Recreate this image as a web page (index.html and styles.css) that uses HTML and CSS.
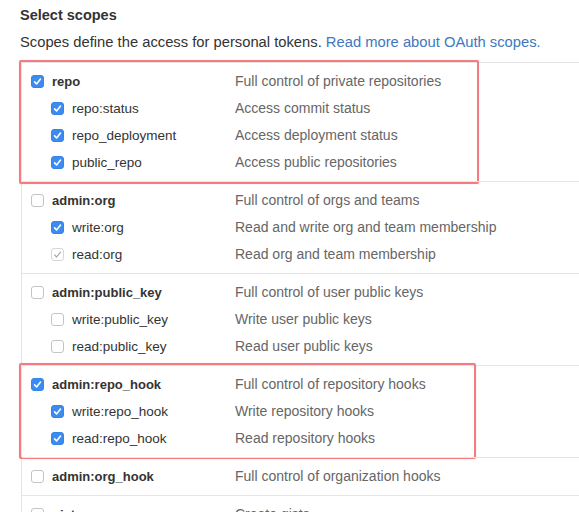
FILE: index.html
```html
<!DOCTYPE html>
<html>
<head>
<meta charset="utf-8">
<link rel="stylesheet" href="styles.css">
</head>
<body>
<div class="page">
  <h3 class="title">Select scopes</h3>
  <p class="note">Scopes define the access for personal tokens. <a href="#">Read more about OAuth scopes.</a></p>
  <div class="scopes">
    <div class="group">
      <span class="highlight hl-repo"></span>
      <div class="row parent"><span class="cb on"><svg viewBox="0 0 13 13"><path d="M3.6 6.9 5.6 9 9.5 4.1"/></svg></span><span class="name">repo</span><span class="desc">Full control of private repositories</span></div>
      <div class="row child"><span class="cb on"><svg viewBox="0 0 13 13"><path d="M3.6 6.9 5.6 9 9.5 4.1"/></svg></span><span class="name">repo:status</span><span class="desc">Access commit status</span></div>
      <div class="row child"><span class="cb on"><svg viewBox="0 0 13 13"><path d="M3.6 6.9 5.6 9 9.5 4.1"/></svg></span><span class="name">repo_deployment</span><span class="desc">Access deployment status</span></div>
      <div class="row child"><span class="cb on"><svg viewBox="0 0 13 13"><path d="M3.6 6.9 5.6 9 9.5 4.1"/></svg></span><span class="name">public_repo</span><span class="desc">Access public repositories</span></div>
    </div>
    <div class="group">
      <div class="row parent"><span class="cb"></span><span class="name">admin:org</span><span class="desc">Full control of orgs and teams</span></div>
      <div class="row child"><span class="cb on"><svg viewBox="0 0 13 13"><path d="M3.6 6.9 5.6 9 9.5 4.1"/></svg></span><span class="name">write:org</span><span class="desc">Read and write org and team membership</span></div>
      <div class="row child"><span class="cb dis"><svg viewBox="0 0 13 13"><path d="M3.6 6.9 5.6 9 9.5 4.1"/></svg></span><span class="name">read:org</span><span class="desc">Read org and team membership</span></div>
    </div>
    <div class="group">
      <div class="row parent"><span class="cb"></span><span class="name">admin:public_key</span><span class="desc">Full control of user public keys</span></div>
      <div class="row child"><span class="cb"></span><span class="name">write:public_key</span><span class="desc">Write user public keys</span></div>
      <div class="row child"><span class="cb"></span><span class="name">read:public_key</span><span class="desc">Read user public keys</span></div>
    </div>
    <div class="group">
      <span class="highlight hl-hook"></span>
      <div class="row parent"><span class="cb on"><svg viewBox="0 0 13 13"><path d="M3.6 6.9 5.6 9 9.5 4.1"/></svg></span><span class="name">admin:repo_hook</span><span class="desc">Full control of repository hooks</span></div>
      <div class="row child"><span class="cb on"><svg viewBox="0 0 13 13"><path d="M3.6 6.9 5.6 9 9.5 4.1"/></svg></span><span class="name">write:repo_hook</span><span class="desc">Write repository hooks</span></div>
      <div class="row child"><span class="cb on"><svg viewBox="0 0 13 13"><path d="M3.6 6.9 5.6 9 9.5 4.1"/></svg></span><span class="name">read:repo_hook</span><span class="desc">Read repository hooks</span></div>
    </div>
    <div class="group">
      <div class="row parent"><span class="cb"></span><span class="name">admin:org_hook</span><span class="desc">Full control of organization hooks</span></div>
    </div>
    <div class="group">
      <div class="row parent"><span class="cb"></span><span class="name">gist</span><span class="desc">Create gists</span></div>
    </div>
  </div>
</div>
</body>
</html>
```

FILE: styles.css
```css
* { box-sizing: border-box; }
html, body { margin: 0; padding: 0; background: #fff; }
body {
  font-family: "Liberation Sans", Arial, sans-serif;
  font-size: 14px;
  color: #333;
  overflow: hidden;
}
.page { padding-left: 20px; }
.title {
  margin: 0;
  padding-top: 5px;
  font-size: 14.5px;
  line-height: 20px;
  font-weight: bold;
  color: #333;
}
.note {
  margin: 7px 0 0;
  line-height: 20px;
  font-size: 14.75px;
  color: #333;
}
.note a { color: #4078c0; text-decoration: none; }
.scopes {
  margin-top: 10px;
  margin-left: 1px;
  border-left: 1px solid #e5e5e5;
}
.group {
  position: relative;
  border-top: 1px solid #e5e5e5;
  padding: 5px 0 5px 9px;
}
.row {
  display: flex;
  align-items: center;
  height: 27px;
  line-height: 27px;
}
.row.child { padding-left: 20px; }
.name { width: 183px; flex: none; font-size: 13.5px; }
.row.child .name { width: 163px; }
.parent .name { font-weight: bold; color: #333; font-size: 13px; }
.desc { color: #666; white-space: nowrap; }
.cb {
  flex: none;
  width: 13px;
  height: 13px;
  margin-right: 8px;
  border: 1px solid #c4c4c4;
  border-radius: 3px;
  background: #fff;
  display: flex;
}
.cb svg { width: 13px; height: 13px; margin: -1px; }
.cb path { fill: none; stroke: #fff; stroke-width: 1.6; stroke-linecap: round; stroke-linejoin: round; }
.cb.on { background: #3b8bf0; border-color: #3484ea; }
.cb.dis { border-color: #d6d6d6; }
.cb.dis path { stroke: #a8a8a8; stroke-width: 1.2; }
.highlight {
  position: absolute;
  left: -3px;
  top: -3px;
  border: 2px solid #f47c80;
  border-radius: 2px;
  box-shadow: 0 0 1px rgba(240, 100, 100, 0.5);
  pointer-events: none;
}
.hl-repo { width: 460px; height: 124px; }
.hl-hook { width: 457px; height: 96px; }
```
